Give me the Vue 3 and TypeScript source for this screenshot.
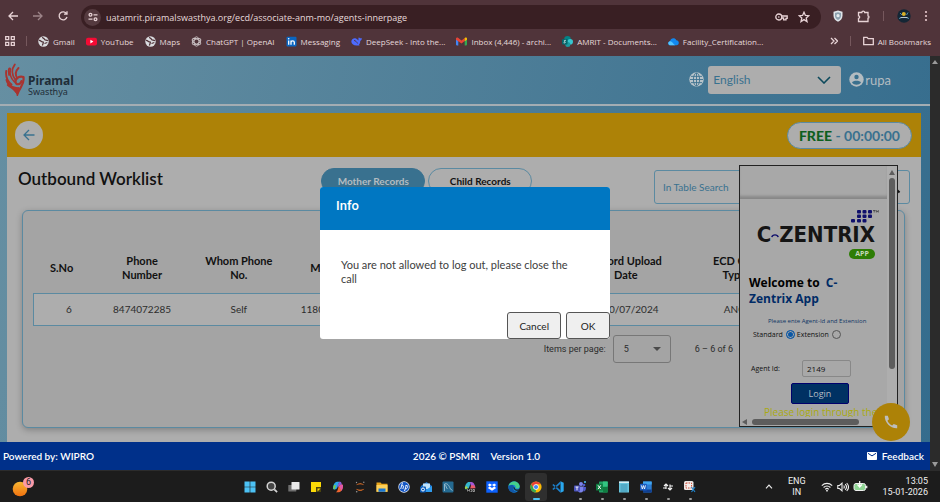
<script setup lang="ts">
import { ref } from 'vue'

interface Bookmark {
  icon: 'globe' | 'youtube' | 'openai' | 'linkedin' | 'deepseek' | 'gmail' | 'sharepoint' | 'cloud'
  label: string
}

interface WorkRow {
  sno: number
  phone: string
  whom: string
  motherId: string
  upload: string
  ecdType: string
}

const bookmarks: Bookmark[] = [
  { icon: 'globe', label: 'Gmail' },
  { icon: 'youtube', label: 'YouTube' },
  { icon: 'globe', label: 'Maps' },
  { icon: 'openai', label: 'ChatGPT | OpenAI' },
  { icon: 'linkedin', label: 'Messaging' },
  { icon: 'deepseek', label: 'DeepSeek - Into the...' },
  { icon: 'gmail', label: 'Inbox (4,446) - archi...' },
  { icon: 'sharepoint', label: 'AMRIT - Documents...' },
  { icon: 'cloud', label: 'Facility_Certification...' },
]

const rows: WorkRow[] = [
  { sno: 6, phone: '8474072285', whom: 'Self', motherId: '118000000000', upload: '10/07/2024', ecdType: 'ANC' },
]

const url = ref('uatamrit.piramalswasthya.org/ecd/associate-anm-mo/agents-innerpage')
const language = ref('English')
const pageSize = ref(5)
const search = ref('')
const mode = ref('standard')
const agentId = ref('2149')
</script>

<template>
  <div class="screen">
    <header class="chrome">
      <div class="toolbar">
        <button class="icon-btn" aria-label="Back">
          <svg width="12" height="12" viewBox="0 0 12 12"><path d="M11 6H2M6 2L2 6l4 4" class="ln" /></svg>
        </button>
        <button class="icon-btn faded" aria-label="Forward">
          <svg width="12" height="12" viewBox="0 0 12 12"><path d="M1 6h9M6 2l4 4-4 4" class="ln" /></svg>
        </button>
        <button class="icon-btn" aria-label="Reload">
          <svg width="12" height="12" viewBox="0 0 12 12"><path d="M9.6 3.8A4 4 0 1 0 10 7M10 1.2v3H7" class="ln" /></svg>
        </button>
        <div class="omnibox">
          <span class="site-info">
            <svg width="10" height="10" viewBox="0 0 10 10"><circle cx="2.5" cy="2.8" r="1.4" class="ln" /><path d="M5.5 2.8H9.5M.5 7.2h4" class="ln" /><circle cx="7.5" cy="7.2" r="1.4" class="ln" /></svg>
          </span>
          <input v-model="url" class="url" aria-label="Address" />
          <svg width="13" height="10" viewBox="0 0 13 10"><circle cx="3.8" cy="5" r="3" class="ln" /><circle cx="3.8" cy="5" r=".8" fill="#e8d9da" /><path d="M6.8 4h5.4v2.4h-1.2v1.4H8.600V6H6.800" class="ln" /></svg>
          <svg width="12" height="12" viewBox="0 0 12 12"><path d="M6 1.200l1.400 3.200 3.500.3-2.700 2.300.8 3.500L6 8.600l-3 1.900.8-3.500L1.100 4.700l3.500-.3z" class="ln" /></svg>
        </div>
        <div class="extensions">
          <svg width="12" height="12" viewBox="0 0 12 12"><path d="M6 .5l4.500 1.300v4C10.500 8.800 8.500 10.700 6 11.700 3.500 10.700 1.500 8.800 1.500 5.800v-4z" fill="#dfe5ea" /><path d="M6 2.200l3 .9v2.700c0 2-1.200 3.300-3 4.100-1.800-.8-3-2.100-3-4.100V3.100z" fill="#8ba0ae" /><circle cx="6" cy="5.700" r="1.600" fill="#e5ebef" /></svg>
          <svg width="13" height="13" viewBox="0 0 13 13"><path d="M1.500 2.500h3.300c0-1.800 2.900-1.800 2.900 0H11v3.300c1.300 0 1.300 2.400 0 2.400v3.300H1.500V8.400c1.600 0 1.600-2.600 0-2.600z" class="ln" /></svg>
          <span class="rule"></span>
          <svg width="14" height="14" viewBox="0 0 14 14"><circle cx="7" cy="7" r="6.700" fill="#142635" /><path d="M2 9.500c3-1.500 7-1.500 10 0M3 4l2 2M11 3.500L9.500 6" stroke="#4c8fb0" fill="none" /><circle cx="6.800" cy="5" r="2" fill="#d9b128" /><path d="M3.500 8.500h7" stroke="#b9c9d2" /></svg>
          <svg width="4" height="12" viewBox="0 0 4 12" fill="#e8c9cd"><circle cx="2" cy="2" r="1.100" /><circle cx="2" cy="6" r="1.100" /><circle cx="2" cy="10" r="1.100" /></svg>
        </div>
      </div>
      <nav class="bookmarks" aria-label="Bookmarks">
        <svg width="10" height="10" viewBox="0 0 10 10"><path d="M.7.7h3v3h-3zM6.300.7h3v3h-3zM.7 6.300h3v3h-3zM6.300 6.300h3v3h-3z" class="ln" /></svg>
        <span class="rule"></span>
        <a v-for="b in bookmarks" :key="b.label" href="#" class="bookmark">
          <svg width="11" height="11" viewBox="0 0 11 11" aria-hidden="true">
            <template v-if="b.icon === 'globe'">
              <circle cx="5.500" cy="5.500" r="5.200" fill="#dadcdf" /><path d="M1 4.500c2-.4 2 1.500 3.500 1.300s.6 1.800-.2 3.800M4.500 1c.2 2 2 1.200 2 2.300s2.300.4 3.500 1.500M6.500 7.500l2.800-1" stroke="#50343a" stroke-width="1.300" fill="none" />
            </template>
            <template v-else-if="b.icon === 'youtube'">
              <rect y="1.700" width="11" height="7.800" rx="2" fill="#f40b34" /><path d="M4.400 3.800v3.600L7.400 5.600z" fill="#fff" />
            </template>
            <template v-else-if="b.icon === 'openai'">
              <g fill="none" stroke="#cfc6c8" stroke-width=".9"><ellipse cx="5.500" cy="5.500" rx="2.400" ry="4.700" /><ellipse cx="5.500" cy="5.500" rx="2.400" ry="4.700" transform="rotate(60 5.500 5.500)" /><ellipse cx="5.500" cy="5.500" rx="2.400" ry="4.700" transform="rotate(120 5.500 5.500)" /></g>
            </template>
            <template v-else-if="b.icon === 'linkedin'">
              <rect x=".5" y=".8" width="10" height="9.700" rx="1" fill="#0a66c2" /><path d="M2.700 4.400v4.400M5 8.800V4.400M5 6.200c.3-1.900 3.300-1.900 3.300.1v2.500" stroke="#fff" stroke-width="1.300" fill="none" /><circle cx="2.700" cy="2.700" r=".8" fill="#fff" />
            </template>
            <template v-else-if="b.icon === 'deepseek'">
              <path d="M.3 5.200C.8 2.600 3 1.800 5 2.400c1 .5 1.800 1.500 2.700 2C7.200 3 7.400 2 8 1.300c.4.900 1.200 1 2.900.9-.2 1.500-.7 2.300-1.700 2.800.2 1.700-.4 2.800-1.300 3.500l.8.800c-1.300.4-2.200.2-3 .1C2.300 9.400.3 7.700.3 5.200z" fill="#4d6bfe" /><path d="M3 4.500c1.500 0 2.800 1.500 3.600 3" stroke="#50343a" stroke-width=".9" fill="none" />
            </template>
            <template v-else-if="b.icon === 'gmail'">
              <path d="M0 2.500h2.300v7H.7L0 8.800z" fill="#4285f4" /><path d="M8.700 2.500H11v6.300l-.7.700H8.700z" fill="#34a853" /><path d="M0 2.500C.2 1.300 1.400 1.300 2.300 2L5.500 4.500 8.700 2v2.900L5.500 7.400 0 3.800z" fill="#ea4335" /><path d="M8.700 2c1-.7 2.200-.5 2.300.7v1L8.700 5.200z" fill="#fbbc04" />
            </template>
            <template v-else-if="b.icon === 'sharepoint'">
              <circle cx="5.500" cy="3.300" r="3.300" fill="#038387" /><circle cx="8.200" cy="5.700" r="2.800" fill="#37c6d0" /><circle cx="5.800" cy="8.500" r="2.500" fill="#1a9ba1" /><rect y="3" width="5.500" height="5.500" rx=".7" fill="#04686c" /><path d="M3.900 4.500c-1.500-.6-2.300.6-1.200 1.100s.7 1.700-1.100 1.100" stroke="#fff" stroke-width=".8" fill="none" />
            </template>
            <template v-else>
              <path d="M2.800 9.300C-.3 9.300-.5 5.600 2 5.200 2.600 2 6.800 1 8.300 4.200c3.200.1 3.400 5 .2 5.100z" fill="#1188f0" /><path d="M2 5.200c2.600-.4 3.200 4 6.500 4.100H2.800C-.3 9.300-.5 5.600 2 5.200z" fill="#52c4ff" />
            </template>
          </svg>
          {{ b.label }}
        </a>
        <span class="more">
          <svg width="8" height="8" viewBox="0 0 8 8"><path d="M1 1l3 3-3 3M4.500 1l3 3-3 3" class="ln" /></svg>
          <span class="rule"></span>
          <a href="#" class="bookmark">
            <svg width="11" height="10" viewBox="0 0 11 10"><path d="M.7 1.300h3.300l1.200 1.400h5.100v6H.7z" class="ln" /></svg>
            All Bookmarks
          </a>
        </span>
      </nav>
    </header>

    <div class="viewport">
      <div class="page">
        <div class="site-header">
          <div class="brand">
            <svg width="20" height="33" viewBox="0 0 20 33" fill="none" stroke="#a83430" stroke-width="1.900" stroke-linecap="round">
              <path d="M1.200 8C.5 14 2 18 6.500 21.500" /><path d="M4 12C2.500 6 4.500 4 5.500 6c-1 4 0 9 4 13" stroke-width="1.600" /><path d="M9.800 1.500C6.500 6 6.500 12 10.500 17" /><path d="M13.500 5C10 8.500 10 12 12.500 15.500" />
              <path d="M1.500 17c1 5 5 7 9.500 8" /><path d="M18.500 14c-4-1.500-8 1-8 4.500 0 4 5 3.500 6-.5" stroke-width="2.200" /><path d="M18.500 15C19.500 21 15 24 12.500 31 11.500 26 6 25 3 22" stroke-width="2.200" /><path d="M7 25l5.500 6.500L14 25z" fill="#a83430" stroke-width="1" />
            </svg>
            <span class="brand-name"><strong>Piramal</strong><small>Swasthya</small></span>
          </div>
          <svg class="globe" width="15" height="15" viewBox="0 0 15 15"><circle cx="7.500" cy="7.500" r="7.200" fill="#b7c3c9" /><g fill="none" stroke="#3d7290" stroke-width=".9"><ellipse cx="7.500" cy="7.500" rx="3.100" ry="6.500" /><path d="M7.500 1v13M1 7.500h13M2 4.400h11M2 10.600h11" /></g></svg>
          <div class="picker">
            <select v-model="language" class="language" aria-label="Language"><option>English</option></select>
            <svg width="14" height="8" viewBox="0 0 14 8"><path d="M1 1l6 6 6-6" fill="none" stroke="#0d4a5c" stroke-width="1.600" /></svg>
          </div>
          <a href="#" class="user">
            <svg width="15" height="15" viewBox="0 0 15 15"><circle cx="7.500" cy="7.500" r="7.200" fill="#b3bcc1" /><circle cx="7.500" cy="5" r="2.200" fill="#39708e" /><path d="M3 10.600c1-2.400 8-2.400 9 0-2 3-7 3-9 0z" fill="#39708e" /></svg>rupa
          </a>
        </div>

        <main class="card">
          <div class="banner">
            <button class="back" aria-label="Go back"><svg width="12" height="12" viewBox="0 0 12 12"><path d="M11.500 6H1M6 1L1 6l5 5" fill="none" stroke="#39718f" stroke-width="1.300" /></svg></button>
            <div class="status"><b>FREE</b> - 00:00:00</div>
          </div>

          <div class="heading">
            <h1>Outbound Worklist</h1>
            <div class="tabs">
              <button class="tab active">Mother Records</button>
              <button class="tab">Child Records</button>
            </div>
            <label class="search">
              <input v-model="search" placeholder="In Table Search" aria-label="In Table Search" />
              <svg width="14" height="14" viewBox="0 0 14 14"><circle cx="5.500" cy="5.500" r="4" fill="none" stroke="#111" stroke-width="1.600" /><path d="M8.500 8.500l4 4" stroke="#111" stroke-width="2" /></svg>
            </label>
          </div>

          <section class="worklist">
            <table>
              <colgroup><col class="c-first" /><col class="c" /><col class="c" /><col class="c" /><col class="c" /><col class="c" /><col class="c" /><col class="c-wide" /><col /></colgroup>
              <thead>
                <tr><th>S.No</th><th>Phone Number</th><th>Whom Phone No.</th><th>Mother ID</th><th></th><th></th><th>Record Upload Date</th><th class="narrow">ECD Call Type</th><th></th></tr>
              </thead>
              <tbody>
                <tr v-for="r in rows" :key="r.sno">
                  <td class="inset">{{ r.sno }}</td><td>{{ r.phone }}</td><td>{{ r.whom }}</td><td>{{ r.motherId }}</td><td></td><td></td><td class="inset">{{ r.upload }}</td><td>{{ r.ecdType }}</td><td></td>
                </tr>
              </tbody>
            </table>
            <div class="paginator">
              <label for="page-size">Items per page:</label>
              <div class="picker">
                <select id="page-size" v-model="pageSize" class="page-size"><option :value="5">5</option></select>
                <svg width="8" height="4" viewBox="0 0 8 4"><path d="M0 0h8L4 4z" fill="#4a4a4a" /></svg>
              </div>
              <span class="range">6 – 6 of 6</span>
            </div>
          </section>
        </main>

        <aside class="softphone">
          <div class="phone-view">
            <div class="phone-top"></div>
            <div class="cz-logo">
              <svg class="cz-dots" width="28" height="13" viewBox="0 0 28 13" fill="#10106c">
                <rect x="6" y="0" width="4" height="3.400" rx="1" /><rect x="11.500" y="0" width="4" height="3.400" rx="1" /><rect x="17" y="0" width="4" height="3.400" rx="1" />
                <rect x="6" y="4.500" width="4" height="3.400" rx="1" /><rect x="11.500" y="4.500" width="4" height="3.400" rx="1" /><rect x="17" y="4.500" width="4" height="3.400" rx="1" />
                <rect x="0" y="9" width="4" height="3.400" rx="1" /><rect x="6" y="9" width="4" height="3.400" rx="1" /><rect x="11.500" y="9" width="4" height="3.400" rx="1" />
                <path d="M22 .5h2.500M23.200.5v2M25.300 2.500v-2l1 1.200 1-1.200v2" fill="none" stroke="#222" stroke-width=".6" />
              </svg>
              <span class="cz-word">C<svg width="8" height="5" viewBox="0 0 10 5"><path d="M1 4.500C2 .8 8 .8 9 4.500" fill="none" stroke="#10106c" stroke-width="1.800" /></svg>ZENTRIX</span>
              <span class="cz-app">APP</span>
            </div>
            <h2>Welcome to &nbsp;<em>C-Zentrix App</em></h2>
            <p class="hint">Please ente Agent-Id and Extension</p>
            <div class="modes">
              <label>Standard <input v-model="mode" type="radio" name="mode" value="standard" /></label>
              <label>Extension <input v-model="mode" type="radio" name="mode" value="extension" /></label>
            </div>
            <div class="agent">
              <label for="agent">Agent Id:</label>
              <input id="agent" v-model="agentId" />
            </div>
            <button class="login">Login</button>
            <p class="notice">Please login through the</p>
          </div>
          <div class="vbar"><i class="up"></i><span></span></div>
          <div class="hbar"><i class="left"></i><span></span></div>
        </aside>

        <button class="call" aria-label="Call">
          <svg width="14" height="14" viewBox="0 0 14 14"><path d="M.8.8h3L5 4.300 3.400 5.800c1 2.200 2.600 3.800 4.800 4.800L9.700 9l3.500 1.200v3C6.500 13.600.4 7.500.8.8z" fill="#bdbdbd" /></svg>
        </button>

        <div class="overlay">
          <div class="dialog" role="dialog" aria-label="Info">
            <div class="dialog-title">Info</div>
            <p>You are not allowed to log out, please close the call</p>
            <div class="actions"><button>Cancel</button><button>OK</button></div>
          </div>
        </div>

        <footer class="site-footer">
          <span>Powered by: WIPRO</span>
          <span class="version"><span>2026 © PSMRI</span><span>Version 1.0</span></span>
          <a href="#"><svg width="10" height="8" viewBox="0 0 10 8"><rect width="10" height="8" rx=".8" fill="#fff" /><path d="M1 1.300l4 2.600 4-2.600" fill="none" stroke="#00308a" /></svg>Feedback</a>
        </footer>
      </div>
      <div class="scrollbar"><i class="up"></i><i class="down"></i></div>
    </div>

    <div class="taskbar">
      <a href="#" class="weather" aria-label="Widgets">
        <svg width="20" height="20" viewBox="0 0 20 20"><defs><linearGradient id="sun" x1="0" y1="0" x2="0" y2="1"><stop offset="0" stop-color="#f7b733" /><stop offset="1" stop-color="#f0710f" /></linearGradient></defs><circle cx="8" cy="12" r="7.300" fill="url(#sun)" /></svg>
        <span class="badge">6</span>
      </a>
      <div class="apps">
        <span><svg viewBox="0 0 12 12"><path d="M.5.500h5.200v5.200H.5zM6.300.500h5.200v5.200H6.300zM.5 6.300h5.200v5.200H.5zM6.300 6.300h5.200v5.200H6.300z" fill="#4cc2f5" /></svg></span>
        <span><svg viewBox="0 0 12 12"><circle cx="5.200" cy="5.200" r="4" fill="#454545" stroke="#d4d4d4" stroke-width="1.500" /><path d="M8.300 8.300l2.800 2.800" stroke="#d4d4d4" stroke-width="1.700" /></svg></span>
        <span><svg viewBox="0 0 12 12"><rect x=".3" y="4" width="8" height="6.500" rx=".6" fill="#6f6f6f" /><rect x="3.500" y="1" width="8" height="7.500" rx=".6" fill="#e9e9e9" /></svg></span>
        <span><svg viewBox="0 0 12 12"><path d="M1 1h10v6l-4 4H1z" fill="#fbd907" /><path d="M6 6h5v5H6z" fill="#4a430e" /><path d="M7.500 10.500v-3h3z" fill="#fbd907" /></svg></span>
        <span><svg viewBox="0 0 12 12"><path d="M1 8C.8 5 2.500.7 5 .7h3.200c-1.600.6-2 2.600-2.600 5C5 8 3.500 9 1 8z" fill="#2ba6e8" /><path d="M2.500 8.500C1 8.500 1 6.500 2 4l2 .5z" fill="#7ac943" /><path d="M11 4c.2 3-1.500 7.300-4 7.300H3.800c1.600-.6 2-2.600 2.600-5C7 4 8.500 3 11 4z" fill="#f0652f" /><path d="M8 .7c1.500 0 1.700 2 2 3.200-2-.4-3 .6-3.500 2.200L5.400 5.700C6 3.200 6.400 1 8 .7z" fill="#8a5bd6" /><path d="M11 4c.2 2-.5 4.500-1.500 6L7.200 5.500C8 3.900 9.500 3.500 11 4z" fill="#e157a6" /></svg></span>
        <span><svg viewBox="0 0 12 12"><path d="M2 4.300C4 1.500 8.500 1.500 10.200 4.300 8 3 4.500 3 2 4.300zM2 7.700C4 10.500 8.500 10.500 10.200 7.700 8 9 4.500 9 2 7.700z" fill="#f37726" /><circle cx="2.500" cy="1.500" r=".7" fill="#999" /><circle cx="9.800" cy="1.200" r=".7" fill="#999" /><circle cx="2.700" cy="10.800" r=".8" fill="#999" /></svg></span>
        <span><svg viewBox="0 0 12 12"><path d="M.5 1.500h4l1.200 1.300h5.800v8H.5z" fill="#e9a51c" /><path d="M.5 4h11v6.800H.5z" fill="#fcd05a" /><path d="M2.500 7.500h7v3.300h-7z" fill="#1976d2" /></svg></span>
        <span><svg viewBox="0 0 12 12"><circle cx="6" cy="6" r="5.700" fill="#e6effb" /><circle cx="6" cy="6" r="5" fill="#1657c4" /><path d="M4.500 1.500L2.700 8M3.600 5c1.500-.9 2.200-.2 1.800 1L4.800 8M8.200 4.500L6.500 10M7.500 4.500h1.400c1.400 0 .6 3.300-.8 3.300H7" stroke="#fff" stroke-width=".9" fill="none" /></svg></span>
        <span><svg viewBox="0 0 12 12"><path d="M1 5l5.500-4L12 5v5.500H1z" fill="#1976d2" /><path d="M3 2.500h7V8H3z" fill="#bfe2fb" /><path d="M1 5l5.500 3.500L12 5v6H1z" fill="#2f9bed" /><rect x="0" y="5.500" width="6" height="6" rx="1" fill="#0d5cb8" /><circle cx="3" cy="8.500" r="1.500" fill="none" stroke="#fff" /></svg></span>
        <span><svg viewBox="0 0 12 12"><rect x=".5" y=".5" width="11" height="11" rx="1" fill="#246a91" /><path d="M2.500 10V3C5 1.500 7.500 5 8 7.500l2.500 2M3 3.500C4.500 5 4 7 5.500 8" stroke="#a9c7d6" stroke-width=".8" fill="none" /></svg></span>
        <span><svg viewBox="0 0 12 12"><path d="M1 7C1 3.500 3 1 5 1h2L4.500 8C3 9 1 9 1 7z" fill="#35b6cf" /><path d="M6 1h1.500C9.500 1 11 4 11.300 6.500L7 5z" fill="#a456d8" /><path d="M1 6c1-1.500 2.500-1 3 2H2C1 8 .7 7 1 6z" fill="#a5d347" /><path d="M7 4.500c3-1 4.700.5 4.300 3L6 8z" fill="#ec5a68" /><rect x="2.500" y="7.500" width="9" height="4" rx=".5" fill="#161616" /><path d="M3.500 10.500v-2l1 1 1-1v2M6.500 8.500h1.300v2H6.500M9 8.500h1.500v2H9z" stroke="#fff" stroke-width=".5" fill="none" /></svg></span>
        <span><svg viewBox="0 0 12 12"><rect x=".3" y=".3" width="11.400" height="11.400" fill="#0c61fe" /><path d="M3.800 2.500L6 4 3.800 5.400 1.800 4zM8.200 2.500L10.200 4 8.200 5.400 6 4zM3.800 5.600L6 7 8.200 5.600 10.200 7 6 9.800 1.800 7z" fill="#fff" /></svg></span>
        <span><svg viewBox="0 0 12 12"><circle cx="6" cy="6" r="5.700" fill="#1785d8" /><path d="M.5 5C1.500-.7 11-1.200 11.700 5.500c-.2 2.700-4.200 2.500-4.300 1C8.500 4 4 2.500.5 5z" fill="#45d08b" /><path d="M.5 5c3-2 6-.5 5.300 1C4 8 6.500 11 9 10.600 5 13-.3 10.500.5 5z" fill="#1157a8" /><path d="M6 6.200c0 3 3 3.500 5 2.500" stroke="#1c1c1c" stroke-width="1.200" fill="none" /></svg></span>
        <span class="current"><svg viewBox="0 0 12 12"><circle cx="6" cy="6" r="5.600" fill="#fbbc05" /><path d="M1.150 3.200a5.600 5.600 0 0 1 9.700 0H6L3.600 7.300z" fill="#ea4335" /><path d="M1.150 3.200L3.600 7.400 6 8.500l-.3 3.100A5.600 5.600 0 0 1 1.150 3.200z" fill="#34a853" /><circle cx="6" cy="6" r="2.700" fill="#fff" /><circle cx="6" cy="6" r="2.100" fill="#4285f4" /></svg></span>
        <span><svg viewBox="0 0 12 12"><path d="M8.500.3L11.700 1.800v8.400L8.500 11.700z" fill="#29a8ee" /><path d="M8.700 2.500L1.500 9 .3 8 8.500.3zM8.700 9.500L1.500 3 .3 4l8.200 7.700z" fill="#1c7fca" /></svg></span>
        <span class="open"><svg viewBox="0 0 12 12"><circle cx="7" cy="3" r="2" fill="#7b83eb" /><circle cx="10" cy="4" r="1.300" fill="#5059c9" /><path d="M4 5.500h6c0 4-1 6-3.500 6S4 10 4 8z" fill="#7b83eb" /><path d="M9 6h3c0 3-.7 4.300-2.500 4.500z" fill="#5059c9" /><rect x="0" y="4.500" width="6" height="6" rx=".7" fill="#4b53bc" /><path d="M1.500 6h3M3 6v3.300" stroke="#fff" stroke-width=".9" /><circle cx="11" cy="1" r="1" fill="#4cc2f5" /></svg></span>
        <span class="open"><svg viewBox="0 0 12 12"><rect x="3" y=".5" width="8.700" height="11" rx=".7" fill="#21a366" /><path d="M7 .5h4.700v5H7z" fill="#33c481" /><path d="M7 6h4.700v5.500H7z" fill="#107c41" /><rect x="0" y="2.800" width="6.800" height="6.700" rx=".6" fill="#107c41" /><path d="M2 4.300l2.800 3.800M4.800 4.300L2 8.100" stroke="#fff" /></svg></span>
        <span class="open"><svg viewBox="0 0 12 12"><rect x="1" y=".5" width="10" height="11" rx=".6" fill="#69c5dd" /><path d="M1 .5h10v1.500H1z" fill="#d8edf3" /><path d="M2.500 4h7M2.500 6h7M2.500 8h7M2.500 10h7" stroke="#2a7a9c" stroke-width=".7" /></svg></span>
        <span class="open"><svg viewBox="0 0 12 12"><rect x="3" y=".5" width="8.700" height="11" rx=".7" fill="#2b7cd3" /><path d="M3 .5h8.700v3H3z" fill="#41a5ee" /><path d="M3 8.500h8.700v3H3z" fill="#103f91" /><rect x="0" y="2.800" width="6.800" height="6.700" rx=".6" fill="#185abd" /><path d="M1.300 4.300l1 3.700 1.100-3.500L4.500 8l1-3.700" stroke="#fff" stroke-width=".8" fill="none" /></svg></span>
        <span class="open"><svg viewBox="0 0 12 12"><path d="M4 8V3M2 5l2-2 2 2M4 7H1M8 3.500v5.500M6 7l2 2 2-2M8 5h3" stroke="#f2f2f2" stroke-width="1.200" fill="none" /></svg></span>
        <span class="open"><svg viewBox="0 0 12 12"><rect x="0" y="0" width="9.500" height="9" rx="1.500" fill="#ece6e3" /><rect x="2" y="2" width="5.500" height="5" fill="#f5efec" stroke="#d1503c" stroke-width="1" stroke-dasharray="1.500 1" /><path d="M7.500 6l3.500 5M11 6L7.500 11" stroke="#1f86d1" stroke-width="1.100" /></svg></span>
      </div>
      <div class="tray">
        <svg width="8" height="5" viewBox="0 0 8 5"><path d="M1 4.300l3-3.200 3 3.200" class="w" /></svg>
        <span class="lang">ENG<br />IN</span>
        <span class="tray-icons">
          <svg width="12" height="10" viewBox="0 0 12 10"><path d="M.8 3.600c3-3 7.400-3 10.400 0M2.600 5.500c2-2 4.800-2 6.800 0M4.300 7.300c1-1 2.400-1 3.400 0" class="w" /><circle cx="6" cy="8.700" r=".9" fill="#eee" /></svg>
          <svg width="12" height="10" viewBox="0 0 12 10"><path d="M.8 3.500h1.700L5 1.200v7.600L2.500 6.500H.8zM6.700 3.500c.8 1 .8 2 0 3M8.200 2.200c1.600 1.700 1.600 3.900 0 5.600M9.700 1c2.200 2.400 2.200 5.600 0 8" class="w" /></svg>
          <svg width="15" height="11" viewBox="0 0 15 11"><rect x="1" y="2.500" width="11.500" height="7" rx="2" fill="#8fd694" stroke="#eee" /><path d="M13.700 4.700v2.500" stroke="#eee" stroke-width="1.300" /><path d="M6.700 0v5M4.500 3.500L6.700 6l2.200-2.500" stroke="#fff" stroke-width="1.200" fill="none" /></svg>
        </span>
        <span class="clock">13:05<br />15-01-2026</span>
      </div>
    </div>
  </div>
</template>

<style>
body {
  margin: 0;
  background: #1c1c1c;
}
</style>

<style scoped>
.screen,
.screen * {
  box-sizing: border-box;
}
.screen {
  min-height: 100vh;
  display: flex;
  flex-direction: column;
  font-family: Lato, "Liberation Sans", sans-serif;
  color: #111;
}
button,
input,
select {
  font: inherit;
  color: inherit;
  margin: 0;
  padding: 0;
  border: 0;
  background: none;
}
select,
input[type="radio"] {
  appearance: none;
}
a {
  color: inherit;
  text-decoration: none;
}
svg {
  display: block;
  flex: none;
}
.ln {
  fill: none;
  stroke: #e8d3d6;
  stroke-width: 1.300;
}
.w {
  fill: none;
  stroke: #eee;
  stroke-width: 1.100;
}

/* browser frame */
.chrome {
  background: #50343a;
  color: #e6dadb;
  font-family: "Open Sans", "Noto Sans", sans-serif;
}
.toolbar {
  display: flex;
  align-items: center;
  height: 30px;
  padding: 2px 12px 0 0;
}
.icon-btn {
  width: 25px;
  display: flex;
  justify-content: center;
}
.faded {
  opacity: 0.5;
}
.omnibox {
  flex: 1;
  display: flex;
  align-items: center;
  gap: 10px;
  height: 24px;
  margin: 2px 11px 0 6px;
  padding: 0 11px 0 3px;
  border-radius: 12px;
  background: #391f23;
}
.site-info {
  width: 17px;
  height: 17px;
  display: grid;
  place-items: center;
  border-radius: 50%;
  background: #553a3f;
}
.url {
  flex: 1;
  font-size: 9px;
  margin-left: -5px;
}
.extensions {
  display: flex;
  align-items: center;
  gap: 13px;
}
.rule {
  width: 1px;
  height: 10px;
  background: #76585d;
}
.bookmarks {
  display: flex;
  align-items: center;
  gap: 11px;
  height: 26px;
  padding: 0 9px 4px 5px;
  font-size: 8px;
}
.bookmark {
  display: flex;
  align-items: center;
  gap: 4px;
  white-space: nowrap;
}
.more {
  display: flex;
  align-items: center;
  gap: 12px;
  margin-left: auto;
}

/* page */
.viewport {
  flex: 1;
  display: flex;
}
.page {
  position: relative;
  flex: 1;
  min-width: 0;
  display: flex;
  flex-direction: column;
  background: linear-gradient(100deg, #668fa2, #346c8d);
}
.scrollbar {
  width: 10px;
  display: flex;
  flex-direction: column;
  align-items: center;
  justify-content: space-between;
  padding: 4px 0 3px;
  background: #2b2b2b;
}
.scrollbar i {
  border: 3px solid transparent;
}
.scrollbar .up {
  border-top: 0;
  border-bottom: 4px solid #9a9a9a;
}
.scrollbar .down {
  border-bottom: 0;
  border-top: 5px solid #9a9a9a;
}
.site-header {
  display: flex;
  align-items: center;
  height: 50px;
  padding: 0 39px 1px 5px;
  border-bottom: 2px solid #a3adb3;
}
.brand {
  display: flex;
  align-items: center;
  gap: 3px;
  margin-right: auto;
}
.brand-name {
  display: flex;
  flex-direction: column;
  padding-top: 12px;
  font-family: "Noto Sans", sans-serif;
  color: #1f2d38;
}
.brand-name strong {
  font-size: 12px;
  line-height: 12px;
}
.brand-name small {
  font-size: 9px;
  line-height: 10px;
}
.globe {
  margin-right: 4px;
}
.picker {
  display: grid;
  align-items: center;
}
.picker > * {
  grid-area: 1 / 1;
}
.picker svg {
  justify-self: end;
  margin-right: 10px;
  pointer-events: none;
}
.language {
  width: 133px;
  height: 28px;
  padding-left: 5px;
  border-radius: 3px;
  background: #adadad;
  color: #39718f;
  font-size: 12px;
}
.user {
  display: flex;
  align-items: center;
  gap: 1px;
  margin-left: 8px;
  color: #b3bcc1;
  font-size: 13px;
}
.card {
  flex: 1;
  margin: 7px 9px 0 7px;
  padding-bottom: 12px;
  background: #adadad;
}
.banner {
  display: flex;
  align-items: center;
  justify-content: space-between;
  height: 44px;
  padding: 0 9px 0 8px;
  background: #ad8207;
}
.back {
  width: 28px;
  height: 28px;
  display: grid;
  place-items: center;
  border-radius: 50%;
  background: #adadad;
}
.status {
  height: 27px;
  padding: 0 11px;
  border: 1px solid #5b8aa1;
  border-radius: 14px;
  background: #adadad;
  color: #39718f;
  font-size: 14px;
  font-weight: 700;
  line-height: 25px;
}
.status b {
  color: #0d5f1e;
}
.heading {
  display: flex;
  align-items: flex-start;
  padding: 11px 11px 0;
  height: 53px;
}
h1 {
  flex: 0 0 34%;
  margin: 0;
  font-size: 17px;
  font-weight: 600;
  line-height: 22px;
}
.tabs {
  display: flex;
  gap: 3px;
}
.tab {
  width: 104px;
  height: 26px;
  border: 1px solid #5b8aa1;
  border-radius: 13px;
  font-size: 10px;
  font-weight: 700;
}
.tab.active {
  background: #39718f;
  border-color: #39718f;
  color: #b3bcc1;
}
.search {
  width: 256px;
  height: 34px;
  display: flex;
  align-items: center;
  margin: 2px 0 0 auto;
  padding: 0 8px;
  border: 1px solid #5b8aa1;
  border-radius: 3px;
  font-size: 10px;
}
.search input {
  flex: 1;
}
.search input::placeholder {
  color: #39718f;
  opacity: 1;
}
.worklist {
  margin: 0 16px 0 15px;
  padding: 26px 10px 64px;
  border: 1px solid #5b8aa1;
  border-radius: 6px;
  background: #a4a4a4;
  box-shadow: 0 2px 6px rgba(0, 0, 0, 0.25);
}
table {
  width: 100%;
  table-layout: fixed;
  border-collapse: collapse;
  text-align: center;
}
.c-first {
  width: 7%;
}
.c {
  width: 11.25%;
}
.c-wide {
  width: 14%;
}
th {
  height: 56px;
  padding: 6px 8px 0;
  font-size: 11px;
  font-weight: 700;
  line-height: 14px;
  white-space: normal;
}
th:first-child {
  padding: 6px 4px 0 0;
}
th:nth-child(2),
th.narrow {
  padding: 6px 28px 0;
}
td {
  height: 32px;
  padding: 0;
  background: #adadad;
  border: solid #5b8aa1;
  border-width: 1px 0;
  color: #2c2c2c;
  font-size: 10px;
}
td.inset {
  padding-left: 10px;
}
td:first-child {
  border-left-width: 1px;
}
td:last-child {
  border-right-width: 1px;
}
.paginator {
  display: flex;
  align-items: center;
  justify-content: flex-end;
  gap: 7px;
  padding: 9px 161px 0 0;
  font-family: Roboto, sans-serif;
  font-size: 9px;
  color: #2c2c2c;
}
.page-size {
  width: 58px;
  height: 28px;
  padding-left: 10px;
  border: 1px solid #777;
  border-radius: 3px;
}
.range {
  margin-left: 17px;
}

/* soft phone window */
.softphone {
  position: absolute;
  top: 109px;
  right: 32px;
  width: 159px;
  height: 262px;
  display: grid;
  grid-template: 1fr 9px / 1fr 10px;
  border: 1px solid #222;
  background: #a8a8a8;
}
.phone-view {
  overflow: hidden;
  font-family: "Open Sans", "Noto Sans", sans-serif;
  font-size: 7px;
  padding: 0 0 0 9px;
}
.phone-top {
  height: 33px;
  margin-left: -9px;
  border-bottom: 1px solid #888;
  box-shadow: inset 0 -3px 3px -1px #888;
}
.cz-logo {
  display: flex;
  flex-direction: column;
  align-items: flex-end;
  width: 130px;
  padding-top: 11px;
}
.cz-word {
  display: flex;
  align-items: center;
  margin: 0 4px 0 0;
  font-family: "Liberation Sans Narrow", "DejaVu Sans Condensed", sans-serif;
  font-size: 22px;
  font-weight: 700;
  line-height: 24px;
  color: #151515;
}
.cz-app {
  width: 26px;
  height: 10px;
  margin: 2px 4px 0 0;
  border-radius: 5px;
  background: #2d7d05;
  color: #c4d8bb;
  font-weight: 700;
  line-height: 10px;
  text-align: center;
}
h2 {
  margin: 16px 40px 0 0;
  font-size: 12px;
  font-weight: 700;
  line-height: 16px;
  color: #000;
}
h2 em {
  font-style: normal;
  color: #002b66;
}
.hint {
  margin: 9px 0 0;
  padding-left: 19px;
  color: #0f3564;
  font-size: 6px;
  line-height: 10px;
  white-space: nowrap;
}
.modes {
  display: flex;
  gap: 2px;
  margin-top: 4px;
  padding-left: 4px;
}
.modes label {
  display: flex;
  align-items: center;
  gap: 3px;
}
.modes input {
  width: 9px;
  height: 9px;
  border: 1px solid #555;
  border-radius: 50%;
}
.modes input:checked {
  border-color: #0a57a5;
  background: #0a57a5;
  box-shadow: inset 0 0 0 1px #a8a8a8;
}
.agent {
  display: flex;
  align-items: center;
  margin-top: 21px;
  padding-left: 2px;
}
.agent label {
  width: 51px;
}
.agent input {
  width: 49px;
  height: 17px;
  padding-left: 4px;
  border: 1px solid #888;
  border-radius: 2px;
  font-size: 8px;
}
.login {
  display: block;
  width: 58px;
  height: 21px;
  margin: 6px 0 0 42px;
  border: 1px solid #00006c;
  border-radius: 2px;
  background: #003163;
  color: #b5bcc4;
  font-size: 9px;
}
.notice {
  margin: 1px 0 0;
  padding-left: 15px;
  font-size: 10px;
  line-height: 14px;
  color: #aaaa10;
  white-space: nowrap;
}
.vbar,
.hbar {
  display: flex;
  align-items: center;
  gap: 3px;
}
.vbar {
  flex-direction: column;
  padding-top: 4px;
  background: #aeaeae;
}
.vbar i {
  border: 3px solid transparent;
  border-top: 0;
  border-bottom: 5px solid #5d5d5d;
}
.vbar span {
  width: 6px;
  height: 191px;
  border-radius: 3px;
  background: #5d5d5d;
}
.hbar {
  grid-column: 1 / 3;
  gap: 5px;
  padding-left: 2px;
}
.hbar i {
  border: 3px solid transparent;
  border-left: 0;
  border-right: 5px solid #5d5d5d;
}
.hbar span {
  width: 107px;
  height: 6px;
  border-radius: 3px;
  background: #5d5d5d;
}
.call {
  position: absolute;
  right: 20px;
  bottom: 29px;
  width: 38px;
  height: 38px;
  display: grid;
  place-items: center;
  border-radius: 50%;
  background: #ad8207;
}

/* dialog */
.overlay {
  position: absolute;
  inset: 0;
  display: grid;
  place-items: center;
  pointer-events: none;
}
.dialog {
  width: 290px;
  overflow: hidden;
  border-radius: 3px;
  background: #fff;
  pointer-events: auto;
}
.dialog-title {
  height: 43px;
  padding: 0 16px;
  background: #0077c2;
  color: #fff;
  font-size: 13px;
  font-weight: 500;
  font-family: Roboto, sans-serif;
  line-height: 37px;
}
.dialog p {
  margin: 28px 32px 26px 21px;
  color: #3d3d3d;
  font-size: 11px;
  line-height: 14px;
}
.actions {
  display: flex;
  justify-content: flex-end;
  gap: 5px;
}
.actions button {
  min-width: 44px;
  height: 27px;
  padding: 0 11px;
  border: 1px solid #555;
  border-radius: 3px;
  background: #efefef;
  color: #222;
  font-size: 10px;
}
.site-footer {
  display: grid;
  grid-template-columns: 1fr auto 1fr;
  align-items: center;
  height: 28px;
  padding: 0 6px 0 3px;
  background: #00308a;
  color: #fff;
  font-size: 10px;
  font-weight: 600;
}
.version {
  display: flex;
  gap: 11px;
  padding-left: 26px;
}
.site-footer a {
  display: flex;
  align-items: center;
  justify-self: end;
  gap: 5px;
}

/* taskbar */
.taskbar {
  display: grid;
  grid-template-columns: 1fr auto 1fr;
  align-items: center;
  height: 32px;
  padding: 0 12px;
  background: #1c1c1c;
  border-top: 1px solid #2c2c2c;
  color: #f0f0f0;
  font-family: Roboto, "Open Sans", sans-serif;
  font-size: 9px;
}
.weather {
  position: relative;
  justify-self: start;
}
.badge {
  position: absolute;
  top: 0;
  right: -2px;
  width: 11px;
  height: 11px;
  border-radius: 50%;
  background: #f99aa8;
  color: #222;
  line-height: 11px;
  text-align: center;
}
.apps {
  display: flex;
}
.apps span {
  position: relative;
  width: 22px;
  height: 28px;
  display: grid;
  place-items: center;
}
.apps svg {
  width: 12px;
  height: 12px;
}
.apps .current {
  border-radius: 3px;
  background: #2f2f2f;
}
.apps .open::after,
.apps .current::after {
  content: "";
  position: absolute;
  bottom: 1px;
  width: 3px;
  height: 2px;
  border-radius: 1px;
  background: #9a9a9a;
}
.apps .current::after {
  width: 7px;
  background: #4cc2f5;
}
.tray {
  display: flex;
  align-items: center;
  justify-content: flex-end;
  gap: 15px;
  line-height: 11px;
}
.lang {
  text-align: center;
}
.tray-icons {
  display: flex;
  align-items: center;
  gap: 4px;
}
.clock {
  text-align: right;
}
</style>
